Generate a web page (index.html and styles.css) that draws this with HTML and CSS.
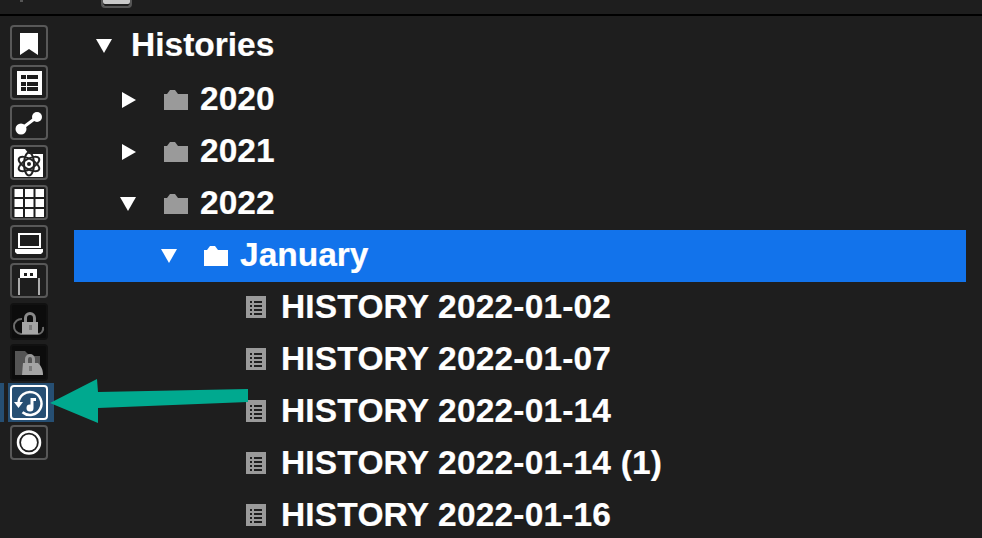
FILE: index.html
```html
<!DOCTYPE html>
<html lang="en">
<head>
    <meta charset="utf-8" />
    <title>Histories</title>
    <link rel="stylesheet" href="styles.css">
</head>
<body>

  <svg class="defs" width="0" height="0">
    <symbol id="folder" viewBox="0 0 24 20">
      <path d="M0 20V4h3L6 0h5l3 4h10v16z" fill="currentColor"/>
    </symbol>
    <symbol id="list" viewBox="0 0 20 22">
      <path fill-rule="evenodd" d="M0 0h20v22H0z M4 5v2h2V5z M8 5v2h8V5z M4 9v2h2V9z M8 9v2h8V9z M4 13v2h2v-2z M8 13v2h8v-2z M4 17v2h2v-2z M8 17v2h8v-2z" fill="#9a9a9a"/>
    </symbol>
    <symbol id="down" viewBox="0 0 16 14">
      <path d="M0 0h16L8 14z" fill="#fff"/>
    </symbol>
    <symbol id="right" viewBox="0 0 14 16">
      <path d="M0 0l14 8L0 16z" fill="#fff"/>
    </symbol>
  </svg>

  <div class="topbar">
    <span class="top-dot"></span>
    <span class="top-btn"></span>
  </div>

  <div class="main">
    <div class="rail">
      <div class="rail-btn">
        <svg viewBox="0 0 34 31"><path d="M8 6h18v22l-9-6-9 6z" fill="#fff"/></svg>
      </div>
      <div class="rail-btn">
        <svg viewBox="0 0 34 31"><path fill-rule="evenodd" d="M5 4h25v24H5z M9 8v4h5V8z M15 8v4h11V8z M9 15v4h5v-4z M15 15v4h11v-4z M9 20v4h5v-4z M15 20v4h11v-4z" fill="#fff"/></svg>
      </div>
      <div class="rail-btn">
        <svg viewBox="0 0 34 31">
          <path d="M9 22L25 10" stroke="#fff" stroke-width="3"/>
          <circle cx="9" cy="22" r="5.5" fill="#fff"/><circle cx="25" cy="10" r="5" fill="#fff"/>
        </svg>
      </div>
      <div class="rail-btn">
        <svg viewBox="0 0 34 31">
          <path d="M2 2h11l4 5h14v23H2z" fill="#fff"/>
          <g fill="none" stroke="#222" stroke-width="2">
            <ellipse cx="17" cy="17" rx="11.500" ry="5" transform="rotate(30 17 17)"/>
            <ellipse cx="17" cy="17" rx="11.500" ry="5" transform="rotate(-30 17 17)"/>
            <ellipse cx="17" cy="17" rx="11.500" ry="5" transform="rotate(90 17 17)"/>
          </g>
          <circle cx="17" cy="17" r="2" fill="#222"/>
        </svg>
      </div>
      <div class="rail-btn">
        <svg viewBox="0 0 34 31">
          <g fill="#fff">
            <path d="M2.500 2H11v8H2.500z"/><path d="M13 2h8.500v8H13z"/><path d="M23.500 2H32v8h-8.500z"/>
            <path d="M2.500 12H11v8H2.500z"/><path d="M13 12h8.500v8H13z"/><path d="M23.500 12H32v8h-8.500z"/>
            <path d="M2.500 22H11v8H2.500z"/><path d="M13 22h8.500v8H13z"/><path d="M23.500 22H32v8h-8.500z"/>
          </g>
        </svg>
      </div>
      <div class="rail-btn">
        <svg viewBox="0 0 34 31">
          <path d="M7 7h21v13H7z" fill="none" stroke="#fff" stroke-width="2"/>
          <path d="M3 22h28v3l-2 2H5l-2-2z" fill="#fff"/>
        </svg>
      </div>
      <div class="rail-btn rail-btn-usb">
        <svg viewBox="0 0 34 31">
          <path fill-rule="evenodd" d="M8 4h17v9H8z M12 8v3h3V8z M18 8v3h3V8z" fill="#fff"/>
          <path d="M7 30V13M27 30V13" fill="none" stroke="#ddd" stroke-width="1.500"/>
        </svg>
      </div>
      <div class="rail-btn rail-btn-off">
        <svg viewBox="0 0 34 33">
          <path d="M10 14a7 7 0 0 0-1 15h17c3 0 6-3 5-7" fill="none" stroke="#6c6c6c" stroke-width="2"/>
          <path d="M12 13a6 6 0 0 1 12 0v4h-3v-4a3 3 0 0 0-6 0v4h-3z" fill="#8a8a8a"/>
          <path d="M10 17h16v12H10z" fill="#a5a5a5"/>
          <path d="M17 20h3v5h-3z" fill="#7c7c7c"/>
        </svg>
      </div>
      <div class="rail-btn rail-btn-off">
        <svg viewBox="0 0 34 33">
          <path d="M3 5h10l5 5h10v19H3z" fill="#555"/>
          <path d="M13 13a5 5 0 0 1 10 0v4h-3v-4a2 2 0 0 0-4 0v4h-3z" fill="#999"/>
          <path d="M11 17h15c3 3 5 6 5 12H10z" fill="#a5a5a5"/>
          <path d="M17 20h3v5h-3z" fill="#7c7c7c"/>
        </svg>
      </div>
      <div class="rail-current">
        <div class="rail-btn rail-btn-on">
          <svg viewBox="0 0 34 31">
            <path d="M6.500 16a11.500 11.500 0 1 1 4 9.200" fill="none" stroke="#fff" stroke-width="2.500"/>
            <path d="M2 15h9l-4.500 6z" fill="#fff"/>
            <path d="M18.500 11H24v3h-2.500v7a3.500 3.500 0 1 1-3-3.400z" fill="#fff"/>
          </svg>
        </div>
      </div>
      <div class="rail-btn">
        <svg viewBox="0 0 34 31">
          <circle cx="17" cy="15.500" r="11" fill="none" stroke="#fff" stroke-width="2.500"/>
          <circle cx="17" cy="15.500" r="8" fill="#fff"/>
        </svg>
      </div>
    </div>

    <div class="tree">
      <div class="row row-root">
        <svg class="twisty twisty-down"><use href="#down"/></svg>
        <span class="label">Histories</span>
      </div>
      <div class="row row-year">
        <svg class="twisty twisty-right"><use href="#right"/></svg>
        <svg class="folder"><use href="#folder"/></svg>
        <span class="label">2020</span>
      </div>
      <div class="row row-year">
        <svg class="twisty twisty-right"><use href="#right"/></svg>
        <svg class="folder"><use href="#folder"/></svg>
        <span class="label">2021</span>
      </div>
      <div class="row row-year row-open">
        <svg class="twisty twisty-down"><use href="#down"/></svg>
        <svg class="folder"><use href="#folder"/></svg>
        <span class="label">2022</span>
      </div>
      <div class="row row-month selected">
        <svg class="twisty twisty-down"><use href="#down"/></svg>
        <svg class="folder"><use href="#folder"/></svg>
        <span class="label">January</span>
      </div>
      <div class="row row-file">
        <svg class="file"><use href="#list"/></svg>
        <span class="label">HISTORY 2022-01-02</span>
      </div>
      <div class="row row-file">
        <svg class="file"><use href="#list"/></svg>
        <span class="label">HISTORY 2022-01-07</span>
      </div>
      <div class="row row-file">
        <svg class="file"><use href="#list"/></svg>
        <span class="label">HISTORY 2022-01-14</span>
      </div>
      <div class="row row-file">
        <svg class="file"><use href="#list"/></svg>
        <span class="label">HISTORY 2022-01-14 (1)</span>
      </div>
      <div class="row row-file">
        <svg class="file"><use href="#list"/></svg>
        <span class="label">HISTORY 2022-01-16</span>
      </div>
    </div>
  </div>

  <!-- arrow drawn on top of the screenshot -->
  <svg class="arrow" viewBox="0 0 200 46">
    <path d="M0 24L47 0l1 13 150-3v13L48 29v15z" fill="#00a98f"/>
  </svg>

</body>
</html>
```

FILE: styles.css
```css
body {
    font-family: "Liberation Sans", Arial, sans-serif;
    background-color: #1e1e1e;
    color: #fff;
    margin: 0;
    height: 100vh;
    overflow: hidden;
    position: relative;
}
.defs { position: absolute; }

/* top bar */
.topbar {
    height: 14px;
    border-bottom: 2px solid #000;
    display: flex;
    align-items: flex-start;
    overflow: hidden;
}
.top-dot {
    width: 3px; height: 2px;
    margin-left: 20px;
    background-color: #555;
}
.top-btn {
    width: 31px; height: 8px;
    margin-left: 78px;
    box-sizing: border-box;
    background-color: #c9c9c9;
    border: 2px solid #555;
    border-top: none;
    border-radius: 0 0 4px 4px;
    box-shadow: inset 0 -2px 0 #1e1e1e;
}

.main { display: flex; }

/* left icon rail */
.rail {
    width: 74px;
    box-sizing: border-box;
    padding: 9px 0 0 10px;
    display: flex;
    flex-direction: column;
    align-items: flex-start;
    gap: 5px;
}
.rail-btn {
    width: 38px; height: 35px;
    box-sizing: border-box;
    border: 2px solid #585858;
    border-radius: 4px;
    display: flex;
}
.rail-btn svg { width: 34px; height: 31px; }
.rail-btn-usb { margin-top: -2px; }
.rail-btn-off {
    height: 37px;
    margin-bottom: -1px;
    border-color: #111;
    background-color: #0c0c0c;
}
.rail-btn-off svg { filter: blur(0.6px); height: 33px; }
.rail-btn-on { border-color: #fff; background-color: #264f73; }
.rail-current {
    position: relative;
    margin: -2px 0 -2px -2px;
    padding: 2px 6px 2px 2px;
    background-color: #264f73;
}
.rail-current::before {
    content: "";
    position: absolute;
    left: -8px; top: 0; bottom: 0;
    width: 4px;
    background-color: #264f73;
}

/* tree */
.tree { width: 892px; padding-top: 4px; }
.row {
    height: 52px;
    box-sizing: border-box;
    display: flex;
    align-items: center;
    font-size: 33.5px;
    font-weight: bold;
    white-space: nowrap;
}
.label { margin-bottom: 3px; -webkit-text-stroke: 0.2px #fff; }
.row-root { padding-left: 22px; margin-bottom: 2px; }
.row-year { padding-left: 48px; }
.row-open { padding-left: 46px; }
.row-month { padding-left: 87px; }
.row-file { padding-left: 172px; letter-spacing: 0.17px; }
.selected { background-color: #1273eb; }

.twisty { flex: none; }
.twisty-down { width: 16px; height: 14px; margin-top: -1px; }
.twisty-right { width: 14px; height: 16px; }
.row-root .twisty { margin-right: 19px; }
.row-year .twisty { margin-right: 28px; }
.row-open .twisty { margin-right: 28px; }
.row-month .twisty { margin-right: 27px; }

.folder { width: 24px; height: 20px; margin-right: 12px; color: #9a9a9a; flex: none; }
.selected .folder { color: #fff; }
.file { width: 20px; height: 22px; margin-right: 15px; margin-top: -2px; flex: none; }

/* teal arrow */
.arrow {
    position: absolute;
    left: 50px; top: 379px;
    width: 200px; height: 46px;
}
```
